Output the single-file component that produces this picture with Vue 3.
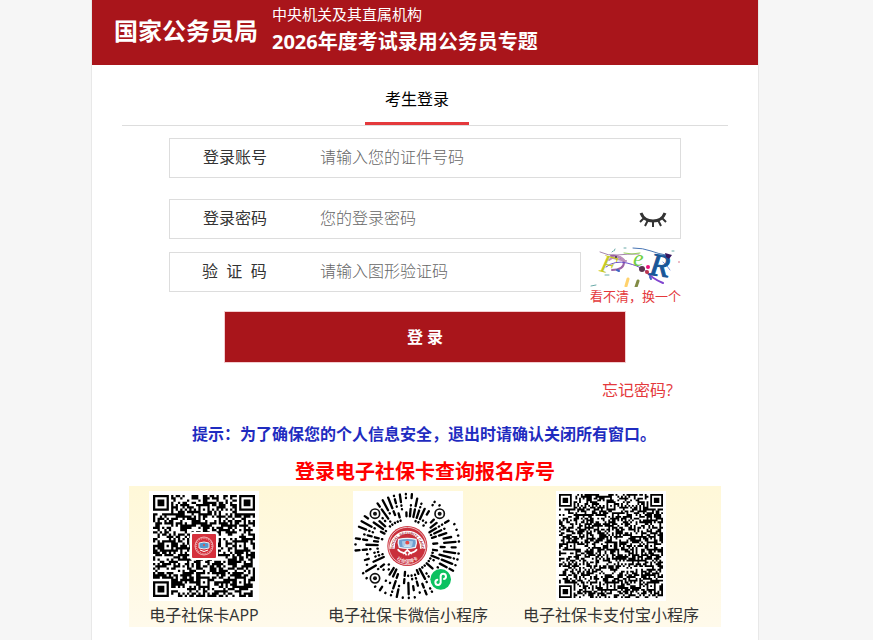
<script setup>
import { ref } from 'vue'

const account = ref('')
const password = ref('')
const captcha = ref('')
const visible = ref(false)

function makeRandom(seed) {
  let s = seed
  return () => {
    s = (s * 1664525 + 1013904223) % 4294967296
    return s / 4294967296
  }
}

// Square code: finder, timing and alignment marks plus a data area
function buildMatrix(size, aligns, seed) {
  const random = makeRandom(seed)
  const grid = Array.from({ length: size }, () =>
    Array.from({ length: size }, () => random() < 0.54)
  )
  for (let i = 0; i < size; i++) {
    grid[6][i] = i % 2 === 0
    grid[i][6] = i % 2 === 0
  }
  const finder = (r, c) => {
    for (let y = -1; y <= 7; y++) {
      for (let x = -1; x <= 7; x++) {
        if (r + y < 0 || c + x < 0 || r + y >= size || c + x >= size) continue
        const d = Math.max(Math.abs(y - 3), Math.abs(x - 3))
        grid[r + y][c + x] = d === 3 || d < 2
      }
    }
  }
  for (const r of aligns) {
    for (const c of aligns) {
      for (let y = -2; y <= 2; y++) {
        for (let x = -2; x <= 2; x++) {
          grid[r + y][c + x] = Math.max(Math.abs(y), Math.abs(x)) !== 1
        }
      }
    }
  }
  finder(0, 0)
  finder(0, size - 7)
  finder(size - 7, 0)
  let path = ''
  grid.forEach((row, y) => {
    let x = 0
    while (x < size) {
      if (!row[x]) {
        x++
        continue
      }
      let w = 1
      while (x + w < size && row[x + w]) w++
      path += `M${x} ${y}h${w}v1h-${w}z`
      x += w
    }
  })
  return path
}

// Round code: dashes on 54 rays, leaving room for the corner marks
function buildRays() {
  const random = makeRandom(77)
  const corners = [[-97, -97, 24], [97, -97, 24], [-97, 97, 24], [100, 100, 36]]
  let path = ''
  for (let i = 0; i < 54; i++) {
    const a = (i * Math.PI * 2) / 54 + 0.03
    const free = (r) => {
      const x = Math.cos(a) * r
      const y = Math.sin(a) * r
      return corners.every(([cx, cy, m]) => Math.hypot(x - cx, y - cy) > m)
    }
    const radius = (n) => 78 + n * 11
    let step = 0
    while (step < 8) {
      const r = radius(step)
      if (!free(r) || random() < 0.45) {
        step++
        continue
      }
      let len = 0
      while (step + len < 7 && free(radius(step + len + 1)) && random() < 0.58 && len < 3) len++
      const e = radius(step + len) + 1
      path += `M${(Math.cos(a) * r).toFixed(1)} ${(Math.sin(a) * r).toFixed(1)}L${(Math.cos(a) * e).toFixed(1)} ${(Math.sin(a) * e).toFixed(1)}`
      step += len + 1
    }
  }
  return path
}

const appCode = buildMatrix(45, [6, 22, 38], 2026)
const alipayCode = buildMatrix(57, [6, 28, 50], 911)
const rays = buildRays()
const marks = [[-97, -97], [97, -97], [-97, 97]]
</script>

<template>
  <div class="page">
    <div class="sheet">
      <header class="banner">
        <div class="bureau">国家公务员局</div>
        <div class="titles">
          <p class="sub">中央机关及其直属机构</p>
          <h1 class="title">2026年度考试录用公务员专题</h1>
        </div>
      </header>

      <main class="content">
        <nav class="tabs"><a class="tab" href="#login">考生登录</a></nav>

        <form id="login" class="form" @submit.prevent>
          <div class="field">
            <label for="account">登录账号</label>
            <input id="account" v-model="account" type="text" placeholder="请输入您的证件号码" />
          </div>
          <div class="field second">
            <label for="password">登录密码</label>
            <input id="password" v-model="password" :type="visible ? 'text' : 'password'" placeholder="您的登录密码" />
            <button class="eye" type="button" aria-label="显示密码" @click="visible = !visible">
              <svg viewBox="0 0 28 16" width="28" height="16">
                <path d="M2 1Q5 9 14 9T26 1" fill="none" stroke="#333" stroke-width="3" />
                <path d="M5 6L1 10M9 8L6 14M14 9V15M19 8L22 14M23 6L27 10" fill="none" stroke="#333" stroke-width="2" />
              </svg>
            </button>
          </div>
          <div class="verify">
            <div class="field">
              <label for="captcha" class="spaced">验&nbsp; 证&nbsp; 码</label>
              <input id="captcha" v-model="captcha" type="text" placeholder="请输入图形验证码" />
            </div>
            <div class="captcha">
              <svg viewBox="0 0 90 40" width="90" height="40">
                <g fill="none" stroke-linecap="round">
                  <path d="M10 5Q18 9 27 8T49 7" stroke="#a786af" stroke-width="1" />
                  <path d="M21 9Q31 8 34 15Q34 23 22 23" stroke="#9c62a6" stroke-width="2" />
                  <path d="M16 20Q25 13 37 16T52 22" stroke="#694cca" stroke-width="1" />
                  <path d="M23 11L36 14M19 13Q28 6 34 13" stroke="#bd92bd" stroke-width="2" />
                  <path d="M34 6Q42 8 50 6" stroke="#9bd35d" stroke-width="1" />
                  <path d="M43 1Q53 1 61 4T76 8" stroke="#4976b5" stroke-width="1" />
                  <path d="M56 24Q61 31 73 36" stroke="#8044cf" stroke-width="2" />
                  <path d="M73 15Q77 18 80 23" stroke="#7d97e2" stroke-width="1" />
                  <path d="M38 32L36 39" stroke="#ffd26d" stroke-width="3" />
                  <path d="M48 34L46 40" stroke="#828b45" stroke-width="3" />
                  <path d="M15 28L19 28M1 39L6 38M25 2L24 4M34 1L36 1M22 5L23 4M82 4L84 4" stroke="#69aaa8" stroke-width="1" />
                  <path d="M60 30L61 32M27 23L29 24" stroke="#4066c3" stroke-width="2" />
                </g>
                <text class="glyph" x="10" y="26" font-size="26" fill="#c5ca27" transform="rotate(14 18 20)">F</text>
                <text class="glyph" x="43" y="19" font-size="24" fill="#70cf43">e</text>
                <text class="glyph" x="60" y="29" font-size="32" fill="#185698" stroke="#185698" stroke-width="1" transform="rotate(8 70 20)">R</text>
                <circle cx="52" cy="22" r="3" fill="#59364f" />
                <circle cx="58" cy="20" r="2" fill="#ec127b" />
                <circle cx="57" cy="25" r="2" fill="#bd354c" />
                <path d="M75 6L82 8L79 12L76 10z" fill="#37165f" />
                <circle cx="26" cy="10" r="1" fill="#403342" />
                <circle cx="89" cy="15" r="1" fill="#e7a7b5" />
              </svg>
              <a href="#captcha">看不清，换一个</a>
            </div>
          </div>
          <button class="submit" type="submit">登 录</button>
          <a class="forgot" href="#forgot">忘记密码?</a>
        </form>

        <p class="tip">提示：为了确保您的个人信息安全，退出时请确认关闭所有窗口。</p>
        <h2 class="notice">登录电子社保卡查询报名序号</h2>

        <section class="codes">
          <figure>
            <svg class="code" viewBox="-4 -4 110 110">
              <svg x="0" y="0" width="102" height="102" viewBox="0 0 45 45"><path :d="appCode" fill="#000" /></svg>
              <rect x="37" y="37" width="28" height="28" rx="2" fill="#fff" />
              <rect x="39" y="39" width="24" height="24" rx="1" fill="#d5303c" />
              <circle cx="51" cy="51" r="9" fill="none" stroke="#efadb0" stroke-width="1" />
              <circle cx="51" cy="51" r="8" fill="none" stroke="#eaa0a5" stroke-width="2" stroke-dasharray="1 1" />
              <path d="M46 48Q51 46 56 48V53Q51 55 46 53z" fill="#5798ce" stroke="#eee" />
              <circle cx="51" cy="50" r="1" fill="#e94a43" />
              <path d="M47 55Q51 58 55 55" fill="none" stroke="#fff" />
            </svg>
            <figcaption>电子社保卡APP</figcaption>
          </figure>
          <figure>
            <svg class="code" viewBox="-163 -165 330 330">
              <path :d="rays" fill="none" stroke="#000" stroke-width="7" stroke-linecap="round" />
              <g v-for="m in marks" :key="m.join()">
                <circle :cx="m[0]" :cy="m[1]" r="14" fill="#fff" stroke="#111" stroke-width="5" />
                <circle :cx="m[0]" :cy="m[1]" r="6" fill="#111" />
              </g>
              <circle r="60" fill="#c9303b" />
              <circle r="56" fill="none" stroke="#fff" stroke-width="2" />
              <path d="M-54 8A54 54 0 0 1 54 8L38 8A38 38 0 0 0 -38 8z" fill="#fff" />
              <circle r="37" fill="#c9303b" />
              <path id="arc-top" d="M-42 7A42 42 0 1 1 42 7" fill="none" />
              <path id="arc-bottom" d="M-42 28A50 50 0 0 0 42 28" fill="none" />
              <text class="ring"><textPath href="#arc-top" startOffset="50%" text-anchor="middle">SOCIAL SECURITY CARD</textPath></text>
              <text class="ring-cn"><textPath href="#arc-bottom" startOffset="50%" text-anchor="middle">社会保障卡</textPath></text>
              <path d="M-26 -20Q0 -26 26 -20Q30 -8 24 4Q0 10 -24 4Q-30 -8 -26 -20z" fill="#6e9fd0" stroke="#edf5fa" stroke-width="4" />
              <path d="M-16 -14Q0 -18 17 -14L14 2H-14z" fill="#a9cae7" />
              <circle cy="-10" r="6" fill="#e64b47" />
              <path d="M-10 1H10M-7 -3H7" stroke="#fff" stroke-width="2" />
              <path d="M-29 10Q-20 22 -8 20L0 12L8 20Q20 22 29 10M-14 23Q-5 18 -3 28M14 23Q5 18 3 28" fill="none" stroke="#fff" stroke-width="5" />
              <circle cx="100" cy="100" r="31" fill="#0bc160" />
              <path d="M90 101A8 8 0 1 0 100 110V90A8 8 0 1 1 110 99" fill="none" stroke="#fff" stroke-width="6" stroke-linecap="round" />
            </svg>
            <figcaption>电子社保卡微信小程序</figcaption>
          </figure>
          <figure>
            <svg class="code" viewBox="-3 -3 110 110">
              <svg x="0" y="0" width="104" height="104" viewBox="0 0 57 57"><path :d="alipayCode" fill="#000" /></svg>
            </svg>
            <figcaption>电子社保卡支付宝小程序</figcaption>
          </figure>
        </section>
      </main>
    </div>
  </div>
</template>

<style>
body {
  margin: 0;
  background: #f6f6f6;
}
</style>

<style scoped>
.page {
  box-sizing: border-box;
  min-height: 100vh;
  padding-right: 23px;
  display: flex;
  justify-content: center;
  font-family: "Open Sans", "Noto Sans CJK SC", sans-serif;
  font-size: 16px;
  line-height: 24px;
  color: #333;
}
.page * {
  box-sizing: border-box;
}
p, h1, h2, figure {
  margin: 0;
}
a {
  text-decoration: none;
  color: #e4393c;
}
.sheet {
  width: 100%;
  max-width: 668px;
  background: #fff;
  border: solid #e8e8e8;
  border-width: 0 1px;
}
.banner {
  height: 65px;
  padding: 0 22px;
  display: flex;
  gap: 14px;
  background: #a9151b;
  color: #fff;
  white-space: nowrap;
}
.bureau {
  font-size: 24px;
  font-weight: 700;
  line-height: 62px;
}
.titles {
  padding-top: 4px;
}
.sub {
  font-size: 15px;
  line-height: 20px;
}
.title {
  font-size: 20px;
  font-weight: 700;
  line-height: 36px;
}
.content {
  padding: 0 30px 13px;
  display: flex;
  flex-direction: column;
  align-items: center;
}
.tabs {
  width: 100%;
  height: 61px;
  display: flex;
  justify-content: center;
  border-bottom: 1px solid #ddd;
}
.tab {
  height: 60px;
  padding: 0 20px;
  margin-right: 16px;
  line-height: 69px;
  color: #000;
  border-bottom: 3px solid #e4393c;
}
.form {
  width: 100%;
  max-width: 512px;
  padding-top: 12px;
  display: flex;
  flex-direction: column;
}
.field {
  flex: 1;
  min-width: 0;
  min-height: 40px;
  padding-bottom: 2px;
  display: flex;
  align-items: center;
  border: 1px solid #ddd;
}
.second {
  margin: 21px 0 13px;
}
.field label {
  width: 150px;
  padding-left: 33px;
  flex: none;
}
.field .spaced {
  padding-left: 32px;
}
.field input {
  flex: 1;
  min-width: 0;
  height: 36px;
  padding: 0;
  border: 0;
  outline: 0;
  background: none;
  font: inherit;
}
.field input::placeholder {
  color: #666;
  font-weight: 300;
  opacity: 1;
}
.eye {
  width: 28px;
  height: 16px;
  margin: 4px 13px 0 0;
  padding: 0;
  border: 0;
  background: none;
}
.eye svg {
  display: block;
}
.verify {
  height: 60px;
  display: flex;
  align-items: flex-start;
  gap: 9px;
}
.captcha {
  width: 91px;
  margin-top: -5px;
  font-size: 13px;
  line-height: 18px;
  white-space: nowrap;
}
.captcha svg,
.captcha a {
  display: block;
}
.glyph {
  font-family: "Liberation Serif", serif;
  font-style: italic;
}
.submit {
  align-self: center;
  width: 100%;
  max-width: 402px;
  height: 52px;
  margin-top: -1px;
  padding: 0;
  border: 1px solid #f3cdd0;
  background: #a9151b;
  color: #fff;
  font: inherit;
  font-weight: 700;
}
.forgot {
  align-self: flex-end;
  margin: 15px 8px 0 0;
}
.tip {
  margin-top: 20px;
  margin-right: 2px;
  font-weight: 700;
  color: #1f2cc0;
  white-space: nowrap;
}
.notice {
  margin-top: 12px;
  font-size: 20px;
  line-height: 28px;
  color: #f00;
}
.codes {
  width: 100%;
  max-width: 592px;
  padding: 5px 0 1px;
  display: grid;
  grid-template-columns: minmax(0, 150fr) minmax(0, 258fr) minmax(0, 148fr) minmax(0, 36fr);
  justify-items: center;
  background: linear-gradient(#fff8d8, #fffaeb);
}
.codes figure {
  display: flex;
  flex-direction: column;
  align-items: center;
  gap: 3px;
}
.code {
  width: 110px;
  height: 110px;
  background: #fff;
}
.codes figcaption {
  line-height: 22px;
  white-space: nowrap;
}
.ring {
  font: 700 11px "Liberation Sans", sans-serif;
  fill: #a92232;
}
.ring-cn {
  font: 700 14px "Noto Sans CJK SC", sans-serif;
  fill: #f5dada;
}
</style>
